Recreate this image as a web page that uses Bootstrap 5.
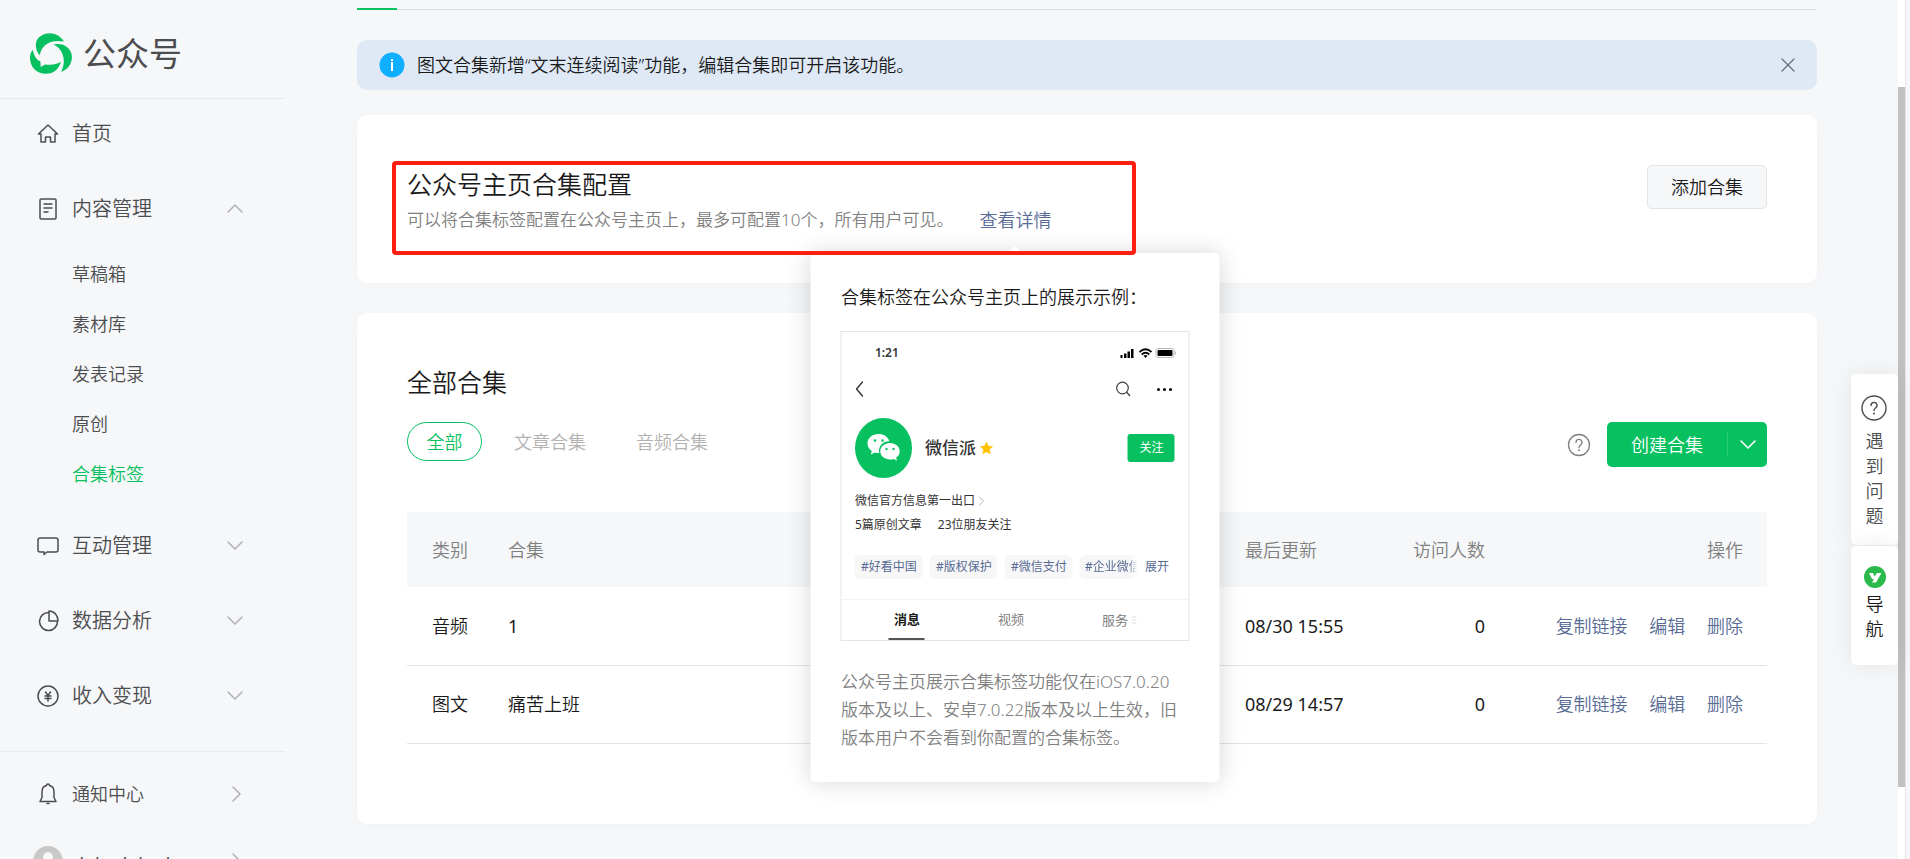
<!DOCTYPE html>
<html lang="zh-CN">
<head>
<meta charset="utf-8">
<meta name="viewport" content="width=device-width, initial-scale=1">
<title>公众号</title>
<link href="https://cdn.jsdelivr.net/npm/bootstrap@5.3.0/dist/css/bootstrap.min.css" rel="stylesheet">
<style>
  body { font-family: "Noto Sans", "Noto Sans CJK SC", sans-serif; font-size: 18px; line-height: 28px; font-weight: 350; background: #f6f7f9; color: #1a1a1a; }
  a { text-decoration: none; color: #576b95; }
  button { font-weight: 350; }
  svg { display: block; flex: none; }
  .stroke { fill: none; stroke: currentColor; stroke-linecap: round; stroke-linejoin: round; }

  .side { width: 285px; color: #4c4d4f; }
  .side a { color: inherit; }
  .brand { height: 99px; padding: 9px 0 0 30px; gap: 11px; border-bottom: 1px solid #e9eaec; font-size: 33px; line-height: 40px; font-weight: 400; }
  .entry { height: 75px; padding: 0 42px 6px 36px; gap: 12px; font-size: 20px; }
  .entry.foot-entry { font-size: 18px; height: 84px; padding-bottom: 0; }
  .entry.account { height: 50px; font-size: 18px; padding: 0 42px 0 33px; gap: 10px; }
  .account span { padding-top: 6px; font-weight: 400; }
  .entry .arrow { color: #b0b1b3; margin-left: auto; }
  .sub { padding: 0 0 12px 72px; }
  .sub a { display: block; line-height: 50px; }
  .sub a.current { color: #07c160; }
  .side-foot { border-top: 1px solid #e9eaec; margin-top: 15px; }

  .content { padding: 8px 81px 0 72px; min-width: 0; }
  .tabline { border-bottom: 1px solid #dfe0e2; height: 2px; }
  .tabline span { display: block; width: 40px; height: 2px; background: #07c160; }
  .notice { margin-top: 30px; height: 50px; border-radius: 10px; background: #dfe9f6; padding: 0 22px; gap: 12px; }
  .bare { border: 0; background: none; padding: 0; color: #6b6e73; }
  .panel { background: #fff; border-radius: 10px; box-shadow: 0 2px 12px rgba(0, 0, 0, .02); padding: 0 50px; }
  .panel h2 { font-size: 25px; line-height: 36px; font-weight: 350; margin: 0; }
  .config { margin-top: 25px; height: 168px; padding-top: 51px; }
  .config p { font-size: 17px; color: #808080; margin: 4px 0 0; }
  .config .add { margin-top: -1px; }
  .detail-link { margin-left: 26px; font-size: 18px; }
  .marker { left: 35px; top: 46px; width: 744px; height: 94px; border: 4px solid #ff1f10; border-radius: 4px; z-index: 20; pointer-events: none; }
  .add { height: 44px; width: 120px; border: 1px solid #e3e4e6; border-radius: 5px; background: #f6f7f9; color: #1a1a1a; }

  .all { margin-top: 30px; padding-top: 51px; padding-bottom: 80px; }
  .tools { margin-top: 22px; }
  .pills { gap: 14px; }
  .pills button { border: 1px solid transparent; border-radius: 20px; background: none; height: 39px; padding: 0 17px; color: #b2b2b2; }
  .pills button.on { border-color: #07c160; color: #07c160; width: 75px; }
  .create { height: 45px; width: 160px; background: #07c160; color: #fff; border-radius: 5px; }
  .create button { border: 0; background: none; color: #fff; padding: 0; }
  .create button + button { width: 40px; height: 25px; border-left: 1px solid #2ccb78; }
  .list { width: 100%; table-layout: fixed; margin-top: 45px; }
  .list thead { background: #f6f7f9; color: #808080; }
  .list th { font-weight: 350; height: 75px; }
  .list td { height: 78px; border-bottom: 1px solid #e4e5e7; }
  .list th:first-child, .list td:first-child { padding-left: 25px; }
  .list th:last-child, .list td:last-child { padding-right: 24px; }
  .list a { margin-left: 17px; }

  .tip { top: 47px; left: 50%; transform: translateX(-50%); width: 409px; padding: 30px; background: #fff; border-radius: 5px; box-shadow: 0 0 24px rgba(0, 0, 0, .16); z-index: 10; color: #1a1a1a; }
  .tip::before { content: ""; position: absolute; left: 50%; top: -7px; margin-left: -7px; border: 7px solid transparent; border-top: 0; border-bottom-color: #fff; }
  .tip .note { font-size: 17px; color: #808080; margin-top: 27px; white-space: nowrap; }
  .phone { margin-top: 20px; border: 1px solid #e5e5e5; font-size: 12px; line-height: 18px; font-weight: 400; color: #333; }
  .phone .status { padding: 12px 12px 0 33px; font-weight: 600; }
  .phone .topbar { padding: 19px 14px 0 14px; height: 48px; }
  .phone .who { height: 60px; margin-top: 8px; padding: 0 14px 0 13px; gap: 12px; font-size: 17px; font-weight: 500; }
  .follow { width: 47px; height: 28px; border: 0; border-radius: 3px; background: #07c160; color: #fff; font-size: 12px; padding: 0; font-weight: 400; }
  .phone .facts { padding: 11px 13px 0; line-height: 24px; }
  .tags { margin-top: 18px; padding: 0 20px 0 13px; gap: 7px; color: #576b95; line-height: 24px; white-space: nowrap; }
  .tags span { flex: none; width: 68px; text-align: center; border-radius: 5px; background: #f7f7f7; }
  .tags span.cut { width: 58px; padding-left: 5px; text-align: left; overflow: hidden; border-radius: 5px 0 0 5px; -webkit-mask-image: linear-gradient(90deg, #000 85%, transparent); mask-image: linear-gradient(90deg, #000 85%, transparent); }
  .tabs { margin-top: 20px; border-top: 1px solid #f2f2f2; height: 41px; padding: 0 13px; font-size: 13px; color: #808080; }
  .tabs > span { line-height: 38px; height: 40px; padding: 0 5px; }
  .tabs .on { font-weight: 600; color: #1a1a1a; border-bottom: 2px solid #555; }

  .float { top: 374px; right: 12px; width: 47px; z-index: 5; line-height: 25px; }
  .float button { border: 0; width: 47px; border-radius: 5px; background: #fff; color: #4c4d4f; box-shadow: 0 0 24px rgba(0, 0, 0, .08); padding: 21px 14px 16px; line-height: inherit; }
  .float button + button { margin-top: 1px; color: #1a1a1a; padding: 20px 14px 23px; }
  .float svg { margin-left: -4px; }
  .float button + button svg { margin-left: -1px; }
  .rail { width: 12px; background: linear-gradient(90deg, #fff 7px, #e3e4e6 7px, #e3e4e6 8px, #f6f7f9 8px); padding-top: 87px; }
  .rail div { width: 7px; height: 90.7%; background: #c1c1c1; }
</style>
</head>
<body class="d-flex vh-100 overflow-hidden position-relative">

<nav class="side flex-shrink-0" aria-label="主导航">
  <a href="#" class="brand d-flex align-items-center">
    <svg width="42" height="41" viewBox="90 101 125 121" fill="#07c160"><path d="M119 167C105 150 103 128 116 114C138 94 174 97 191 126C158 119 125 130 119 167z"/><path d="M160 135C182 129 204 139 212 158C221 184 206 209 182 216C197 192 194 151 160 135z"/><path d="M98 150C102 170 110 180 121 185L122 202L135 194C155 196 170 194 182 186C177 207 160 222 138 222C108 222 90 200 90 174C90 165 93 156 98 150z"/></svg>
    <span>公众号</span>
  </a>
  <a href="#" class="entry d-flex align-items-center">
    <svg width="24" height="24" viewBox="0 0 24 24" class="stroke" stroke-width="1.5"><path d="M2.500 12 12 3l9.500 9H19v8h-4.500v-5h-5v5H5v-8z"/></svg>首页
  </a>
  <a href="#" class="entry d-flex align-items-center">
    <svg width="24" height="24" viewBox="0 0 24 24" class="stroke" stroke-width="1.500"><rect x="4" y="2" width="16" height="20" rx="1"/><path d="M8 7h8M8 11h8M8 15h4"/></svg>内容管理
    <svg class="arrow stroke" width="16" height="16" viewBox="0 0 16 16" stroke-width="1.500"><path d="m1 11 7-7 7 7"/></svg>
  </a>
  <div class="sub">
    <a href="#">草稿箱</a><a href="#">素材库</a><a href="#">发表记录</a><a href="#">原创</a><a href="#" class="current">合集标签</a>
  </div>
  <a href="#" class="entry d-flex align-items-center">
    <svg width="24" height="24" viewBox="0 0 24 24" class="stroke" stroke-width="1.500"><path d="M4 4h16q2 0 2 2v10q0 2-2 2h-9l-3 2.500V18H4q-2 0-2-2V6q0-2 2-2z"/></svg>互动管理
    <svg class="arrow stroke" width="16" height="16" viewBox="0 0 16 16" stroke-width="1.500"><path d="m1 4 7 7 7-7"/></svg>
  </a>
  <a href="#" class="entry d-flex align-items-center">
    <svg width="24" height="24" viewBox="0 0 24 24" class="stroke" stroke-width="1.500"><path d="M13 3.500a9 9 0 1 0 8.500 8.500M13 2v10h9A9 9.500 0 0 0 13 2z"/></svg>数据分析
    <svg class="arrow stroke" width="16" height="16" viewBox="0 0 16 16" stroke-width="1.500"><path d="m1 4 7 7 7-7"/></svg>
  </a>
  <a href="#" class="entry d-flex align-items-center">
    <svg width="24" height="24" viewBox="0 0 24 24" class="stroke" stroke-width="1.500"><circle cx="12" cy="12" r="10"/><path d="m9.500 8 2.500 3.500L14.500 8M12 11.500V17M9 12h6M9 14.500h6"/></svg>收入变现
    <svg class="arrow stroke" width="16" height="16" viewBox="0 0 16 16" stroke-width="1.500"><path d="m1 4 7 7 7-7"/></svg>
  </a>
  <div class="side-foot">
    <a href="#" class="entry foot-entry d-flex align-items-center">
      <svg width="24" height="24" viewBox="0 0 24 24" class="stroke" stroke-width="1.500"><path d="M4 19.500h16l-2-4V10c0-4-2-6-4.500-6.500a1.500 1.500 0 0 0-3 0C8 4 6 6 6 10v5.500zM11 21.500h2"/></svg>通知中心
      <svg class="arrow stroke" width="16" height="16" viewBox="0 0 16 16" stroke-width="1.500"><path d="m6 1 7 7-7 7"/></svg>
    </a>
    <a href="#" class="entry account d-flex align-items-center">
      <svg width="30" height="30" viewBox="0 0 30 30"><circle cx="15" cy="15" r="15" fill="#c8c8c8"/><circle cx="15" cy="11" r="5" fill="#f6f7f9"/><path d="M6 24q2-7 9-7t9 7z" fill="#f6f7f9"/></svg><span>dohadohad</span>
      <svg class="arrow stroke" width="16" height="16" viewBox="0 0 16 16" stroke-width="1.500"><path d="m6 1 7 7-7 7"/></svg>
    </a>
  </div>
</nav>

<main class="content flex-grow-1">
  <div class="tabline"><span></span></div>
  <div class="notice d-flex align-items-center">
    <svg width="26" height="26" viewBox="0 0 26 26"><circle cx="13" cy="13" r="12.500" fill="#10aeff"/><path d="M12 10h2v9h-2zM12 7h2v2h-2z" fill="#fff"/></svg>
    <span>图文合集新增“文末连续阅读”功能，编辑合集即可开启该功能。</span>
    <button class="bare ms-auto" aria-label="关闭"><svg width="14" height="14" viewBox="0 0 14 14" class="stroke" stroke-width="1.300"><path d="m1 1 12 12M13 1 1 13"/></svg></button>
  </div>

  <section class="panel config position-relative d-flex justify-content-between align-items-start">
    <div>
      <h2>公众号主页合集配置</h2>
      <p class="d-flex">可以将合集标签配置在公众号主页上，最多可配置10个，所有用户可见。
        <span class="detail-link position-relative"><a href="#">查看详情</a>
          <span class="tip position-absolute d-block">
            <span class="d-block">合集标签在公众号主页上的展示示例：</span>
            <span class="phone d-block">
              <span class="status d-flex justify-content-between align-items-center">1:21
                <svg width="57" height="12" viewBox="0 0 57 12"><path d="M1 8h2v3H1zM4.500 6.500h2.500V11h-2.500zM8 4.500h2.500V11H8zM11.500 2h2.500V11h-2.500z"/><path d="M20 5q6-5.500 12 0M22.200 7.500q3.800-3.500 7.600 0" fill="none" stroke="#000" stroke-width="1.700"/><path d="m26 11-2-2.200q2-1.500 4 0z"/><rect x="36.500" y="1.500" width="18" height="9" rx="2" fill="none" stroke="#bbb"/><rect x="38" y="3" width="15" height="6" rx="1"/><path d="M56 4.500v3" stroke="#bbb"/></svg>
              </span>
              <span class="topbar d-flex align-items-start">
                <svg width="8" height="16" viewBox="0 0 8 16" class="stroke" stroke-width="1.400"><path d="M7 1 1 8l6 7"/></svg>
                <svg class="ms-auto" width="60" height="16" viewBox="0 0 60 16"><circle cx="8" cy="7" r="5.800" fill="none" stroke="#444" stroke-width="1.200"/><path d="m12 11 3.500 4" stroke="#444" stroke-width="1.300"/><circle cx="44" cy="8.500" r="1.500"/><circle cx="50" cy="8.500" r="1.500"/><circle cx="56" cy="8.500" r="1.500"/></svg>
              </span>
              <span class="who d-flex align-items-center">
                <svg width="58" height="60" viewBox="0 0 58 60"><ellipse cx="29" cy="30" rx="28.500" ry="30" fill="#07c160"/><path d="M24 16c-6.500 0-11 4.200-11 9.500 0 3.200 1.700 5.800 4.300 7.500l-1 3.500 4-2q2 .6 4.500.5c-1.500-6 3-12 10-11.700C33.500 18.500 29 16 24 16z" fill="#fff"/><path d="M35.500 25c-5.500 0-9.700 3.600-9.700 8.300s4.200 8.200 9.700 8.200q2 0 3.700-.5l3.300 1.800-.9-3c2.200-1.500 3.600-3.900 3.600-6.500 0-4.700-4.200-8.300-9.700-8.300z" fill="#fff"/><g fill="#07c160"><circle cx="20.500" cy="22.500" r="1.300"/><circle cx="28" cy="22.500" r="1.300"/><circle cx="32" cy="31" r="1.200"/><circle cx="39" cy="31" r="1.200"/></g></svg>
                <span class="d-flex align-items-center gap-1">微信派
                  <svg width="14" height="14" viewBox="0 0 14 14"><path d="m7 .5 2 4.200 4.600.6-3.400 3.200.9 4.700L7 11l-4.100 2.200.9-4.700L.4 5.300 5 4.700z" fill="#ffc300"/></svg>
                </span>
                <button class="follow ms-auto">关注</button>
              </span>
              <span class="facts d-block">
                <span class="d-flex align-items-center gap-1">微信官方信息第一出口 <svg width="6" height="10" viewBox="0 0 6 10" class="stroke" style="color:#b2b2b2"><path d="m1 1 4 4-4 4"/></svg></span>
                <span class="d-flex gap-3"><span>5篇原创文章</span><span>23位朋友关注</span></span>
              </span>
              <span class="tags d-flex"><span>#好看中国</span><span>#版权保护</span><span>#微信支付</span><span class="cut">#企业微信</span><b class="fw-normal">展开</b></span>
              <span class="tabs d-flex justify-content-around"><span class="on">消息</span><span>视频</span><span class="d-flex align-items-center gap-1">服务 <svg width="5" height="8" viewBox="0 0 5 8" stroke="#ddd"><path d="M0 1h5M0 4h5M0 7h5"/></svg></span></span>
            </span>
            <span class="note d-block">公众号主页展示合集标签功能仅在iOS7.0.20<br>版本及以上、安卓7.0.22版本及以上生效，旧<br>版本用户不会看到你配置的合集标签。</span>
          </span>
        </span>
      </p>
    </div>
    <button class="add">添加合集</button>
    <div class="marker position-absolute"></div>
  </section>

  <section class="panel all">
    <h2>全部合集</h2>
    <div class="tools d-flex align-items-start justify-content-between">
      <div class="pills d-flex">
        <button class="on">全部</button><button>文章合集</button><button>音频合集</button>
      </div>
      <div class="d-flex align-items-center gap-3">
        <svg width="24" height="24" viewBox="0 0 24 24" class="stroke" style="color:#808080" stroke-width="1.300"><circle cx="12" cy="12" r="10.500"/><path d="M9 9.500a3 3 0 1 1 4.500 2.500q-1.500 1-1.500 2.500"/><circle cx="12" cy="17.200" r=".4"/></svg>
        <div class="create d-flex align-items-center">
          <button class="flex-grow-1">创建合集</button>
          <button class="d-flex align-items-center justify-content-center" aria-label="更多"><svg width="16" height="10" viewBox="0 0 16 10" class="stroke" stroke-width="1.600"><path d="m1 1 7 7 7-7"/></svg></button>
        </div>
      </div>
    </div>
    <table class="list">
      <colgroup><col style="width:100px"><col><col style="width:141px"><col style="width:101px"><col style="width:281px"></colgroup>
      <thead><tr><th>类别</th><th>合集</th><th>最后更新</th><th class="text-end">访问人数</th><th class="text-end">操作</th></tr></thead>
      <tbody>
        <tr><td>音频</td><td class="fw-normal">1</td><td class="fw-normal">08/30 15:55</td><td class="text-end fw-normal">0</td><td class="text-end"><a href="#">复制链接</a> <a href="#">编辑</a> <a href="#">删除</a></td></tr>
        <tr><td>图文</td><td>痛苦上班</td><td class="fw-normal">08/29 14:57</td><td class="text-end fw-normal">0</td><td class="text-end"><a href="#">复制链接</a> <a href="#">编辑</a> <a href="#">删除</a></td></tr>
      </tbody>
    </table>
  </section>
</main>

<aside class="float position-absolute">
  <button class="d-block"><svg class="mb-2" width="26" height="26" viewBox="0 0 26 26"><g class="stroke" stroke-width="1.400"><circle cx="13" cy="13" r="12"/><path d="M10 10.500a3 3 0 1 1 4.500 2.500q-1.500 1-1.500 2.500"/><circle cx="13" cy="18.500" r=".4"/></g></svg>遇到问题</button>
  <button class="d-block"><svg class="mb-1" width="22" height="22" viewBox="0 0 22 22"><circle cx="11" cy="11" r="11" fill="#2aba4b"/><path d="M5 7h4l1.500 3.500L13 7h4.500L12 16.500H8l2-3.500H8z" fill="#fff"/></svg>导航</button>
</aside>

<div class="rail flex-shrink-0" aria-hidden="true"><div></div></div>

<script src="https://cdn.jsdelivr.net/npm/bootstrap@5.3.0/dist/js/bootstrap.bundle.min.js"></script>
</body>
</html>
